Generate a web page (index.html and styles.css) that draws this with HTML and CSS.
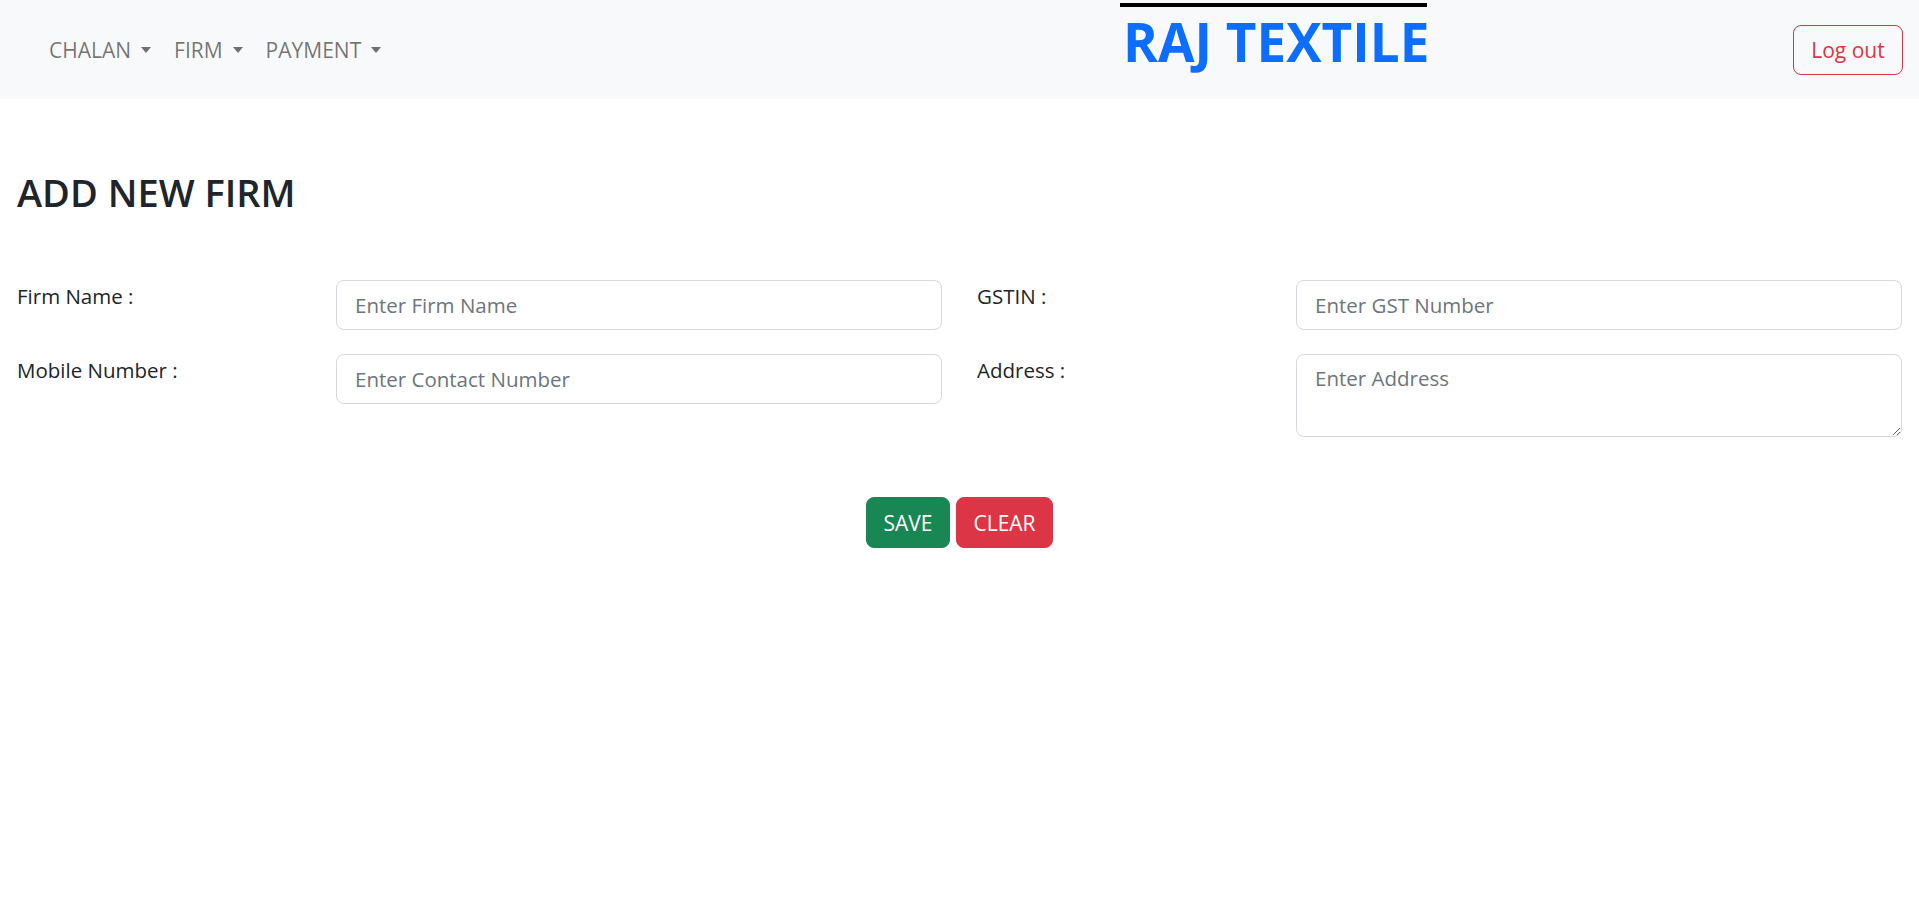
FILE: index.html
```html
<!DOCTYPE html>
<html lang="en">
<head>
<meta charset="utf-8">
<title>Raj Textile - Add New Firm</title>
<link rel="stylesheet" href="styles.css">
</head>
<body>
<header class="navbar">
  <ul class="nav">
    <li><a class="nav-link dropdown-toggle" href="#">CHALAN</a></li>
    <li><a class="nav-link dropdown-toggle" href="#">FIRM</a></li>
    <li><a class="nav-link dropdown-toggle" href="#">PAYMENT</a></li>
  </ul>
  <a class="brand" href="#">RAJ TEXTILE</a>
  <button class="btn-logout" type="button">Log out</button>
</header>
<main class="page">
  <h1 class="title">ADD NEW FIRM</h1>
  <form class="firm-form">
    <div class="form-grid">
      <div class="field">
        <label class="field-label" for="firm">Firm Name :</label>
        <input class="control" id="firm" type="text" placeholder="Enter Firm Name">
      </div>
      <div class="field">
        <label class="field-label" for="gst">GSTIN :</label>
        <input class="control" id="gst" type="text" placeholder="Enter GST Number">
      </div>
      <div class="field">
        <label class="field-label" for="mobile">Mobile Number :</label>
        <input class="control" id="mobile" type="text" placeholder="Enter Contact Number">
      </div>
      <div class="field">
        <label class="field-label" for="address">Address :</label>
        <textarea class="control control-area" id="address" placeholder="Enter Address"></textarea>
      </div>
    </div>
    <div class="actions">
      <button class="btn btn-save" type="button">SAVE</button>
      <button class="btn btn-clear" type="reset">CLEAR</button>
    </div>
  </form>
</main>
</body>
</html>
```

FILE: styles.css
```css
* { box-sizing: border-box; }
html, body {
  margin: 0;
  padding: 0;
  background: #fff;
  font-family: "Open Sans", "Noto Sans", sans-serif;
  color: #212529;
}

.navbar {
  display: flex;
  align-items: center;
  height: 99px;
  background: #f8f9fa;
  padding: 0 16px 0 41px;
}
.nav {
  display: flex;
  list-style: none;
  margin: 0;
  padding: 0;
}
.nav-link {
  display: inline-flex;
  align-items: center;
  padding: 8px 15px 8px 8px;
  font-size: 21px;
  color: rgba(0, 0, 0, 0.55);
  text-decoration: none;
}
.dropdown-toggle::after {
  content: "";
  display: inline-block;
  margin-left: 10px;
  border-top: 6px solid rgba(0, 0, 0, 0.55);
  border-left: 5.5px solid transparent;
  border-right: 5.5px solid transparent;
}
.brand {
  align-self: flex-start;
  margin-top: 3px;
  margin-left: auto;
  margin-right: 366px;
  width: 307px;
  border-top: 4px solid #000;
  padding-left: 3px;
  padding-top: 3px;
  font-size: 53px;
  font-weight: 700;
  line-height: 64px;
  color: #0d6efd;
  text-decoration: none;
  white-space: nowrap;
}
.btn-logout {
  width: 110px;
  height: 50px;
  font-family: inherit;
  font-size: 21px;
  color: #dc3545;
  background: transparent;
  border: 1px solid #dc3545;
  border-radius: 8px;
  padding: 0;
}

.page {
  padding: 0 17px;
}
.title {
  margin: 0;
  padding-top: 67px;
  font-size: 38px;
  font-weight: 600;
  line-height: 52px;
}
.firm-form {
  margin-top: 62px;
}
.form-grid {
  display: grid;
  grid-template-columns: 1fr 1fr;
  column-gap: 35px;
  row-gap: 24px;
  align-items: start;
}
.field {
  display: grid;
  grid-template-columns: 319px 1fr;
  align-items: start;
}
.field-label {
  padding-top: 4px;
  font-size: 20.5px;
  line-height: 24px;
  color: #212529;
}
.control {
  display: block;
  width: 100%;
  height: 50px;
  padding: 0 18px;
  font-family: inherit;
  font-size: 20.5px;
  color: #212529;
  background: #fff;
  border: 1px solid #d5d8dc;
  border-radius: 8px;
}
.control::placeholder {
  color: #6c757d;
}
.control-area {
  height: 83px;
  padding-top: 8px;
  resize: vertical;
  line-height: 30px;
}
.actions {
  display: flex;
  justify-content: center;
  gap: 6px;
  margin-top: 60px;
}
.btn {
  height: 51px;
  padding: 0 14px;
  font-family: inherit;
  font-size: 21px;
  color: #fff;
  border: 1px solid transparent;
  border-radius: 8px;
}
.btn-save {
  width: 84px;
  background: #198754;
  border-color: #198754;
}
.btn-clear {
  width: 97px;
  background: #dc3545;
  border-color: #dc3545;
}
```
